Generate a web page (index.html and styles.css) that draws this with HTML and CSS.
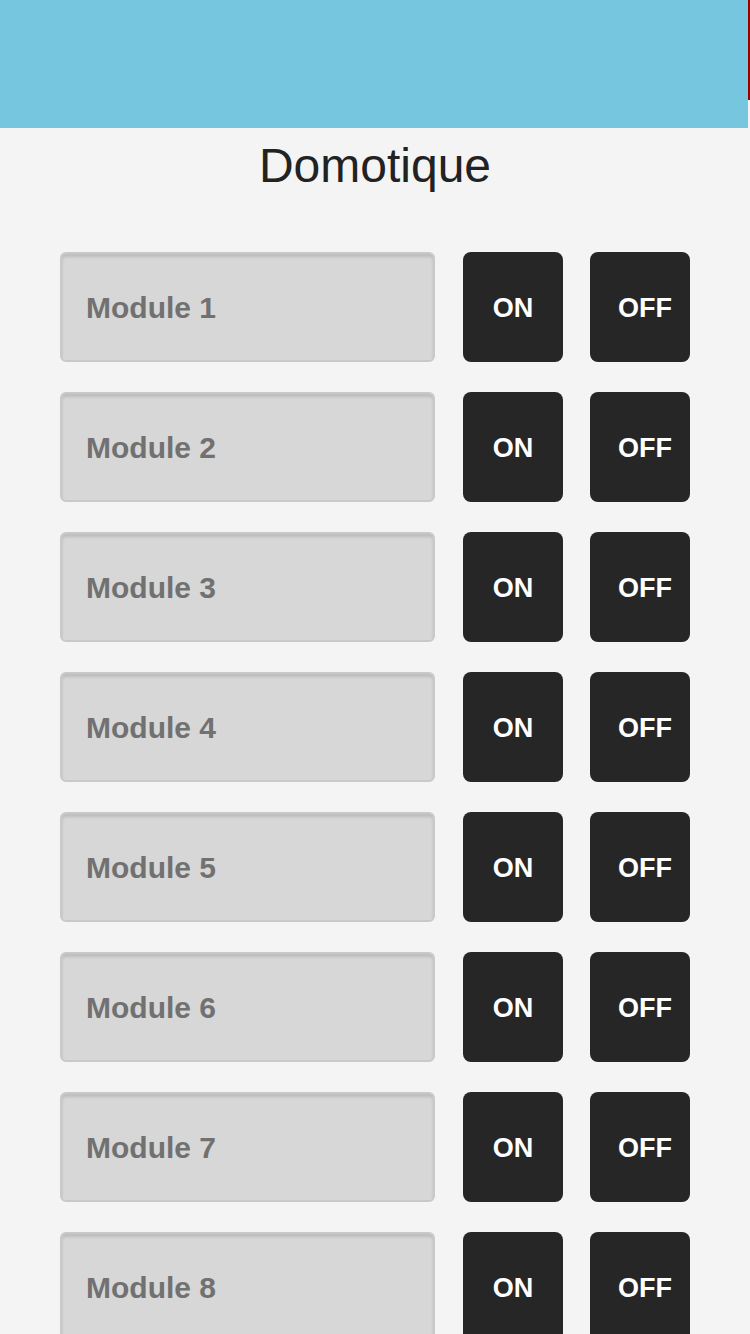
FILE: index.html
```html
<!DOCTYPE html>
<html lang="fr">
<head>
  <meta charset="UTF-8" />
  <meta name="viewport" content="width=device-width, initial-scale=1" />
  <title>Domotique</title>
  <link rel="stylesheet" href="styles.css">
</head>
<body>

  <!-- Header bar -->
  <div class="top-bar">
    <div class="top-fill"></div>
    <div class="top-edge"></div>
  </div>

  <h1 class="page-title">Domotique</h1>

  <!-- Modules -->
  <div class="module-list">
    <div class="module-row">
      <div class="module-field">Module 1</div>
      <button class="button on-button">ON</button>
      <button class="button off-button">OFF</button>
    </div>
    <div class="module-row">
      <div class="module-field">Module 2</div>
      <button class="button on-button">ON</button>
      <button class="button off-button">OFF</button>
    </div>
    <div class="module-row">
      <div class="module-field">Module 3</div>
      <button class="button on-button">ON</button>
      <button class="button off-button">OFF</button>
    </div>
    <div class="module-row">
      <div class="module-field">Module 4</div>
      <button class="button on-button">ON</button>
      <button class="button off-button">OFF</button>
    </div>
    <div class="module-row">
      <div class="module-field">Module 5</div>
      <button class="button on-button">ON</button>
      <button class="button off-button">OFF</button>
    </div>
    <div class="module-row">
      <div class="module-field">Module 6</div>
      <button class="button on-button">ON</button>
      <button class="button off-button">OFF</button>
    </div>
    <div class="module-row">
      <div class="module-field">Module 7</div>
      <button class="button on-button">ON</button>
      <button class="button off-button">OFF</button>
    </div>
    <div class="module-row">
      <div class="module-field">Module 8</div>
      <button class="button on-button">ON</button>
      <button class="button off-button">OFF</button>
    </div>
  </div>

</body>
</html>
```

FILE: styles.css
```css
:root {
  --bg: #f4f4f4;
  --header: #75c6de;
  --edge: #9b0000;
  --field-bg: #d7d7d7;
  --field-border: #c9c9c9;
  --field-text: #717171;
  --button-bg: #262626;
}

body {
  margin: 0;
  background: var(--bg);
  font-family: 'Liberation Sans', Arial, sans-serif;
  overflow: hidden;
  height: 1334px;
}

.top-bar {
  display: flex;
  align-items: flex-start;
  height: 128px;
}

.top-fill {
  flex: 1;
  height: 128px;
  background: var(--header);
}

.top-edge {
  width: 2px;
  height: 100px;
  background: var(--edge);
}

.page-title {
  margin: 10px 0 0;
  font-size: 48px;
  font-weight: 400;
  line-height: 56px;
  text-align: center;
  color: #222;
}

.module-list {
  display: flex;
  flex-direction: column;
  gap: 30px;
  padding: 58px 60px 0;
}

.module-row {
  display: flex;
  align-items: stretch;
  height: 110px;
}

.module-field {
  box-sizing: border-box;
  width: 375px;
  display: flex;
  align-items: center;
  padding-left: 24px;
  padding-top: 2px;
  background: var(--field-bg);
  border: 2px solid var(--field-border);
  border-radius: 6px;
  box-shadow: inset 0 3px 3px rgba(0, 0, 0, 0.12);
  font-size: 30px;
  font-weight: 700;
  color: var(--field-text);
}

.button {
  width: 100px;
  margin-left: 28px;
  padding: 2px 0 0;
  border: none;
  border-radius: 8px;
  background: var(--button-bg);
  color: #fff;
  font-family: inherit;
  font-size: 27px;
  font-weight: 700;
  cursor: pointer;
}

.off-button {
  margin-left: 27px;
  padding-left: 10px;
}
```
